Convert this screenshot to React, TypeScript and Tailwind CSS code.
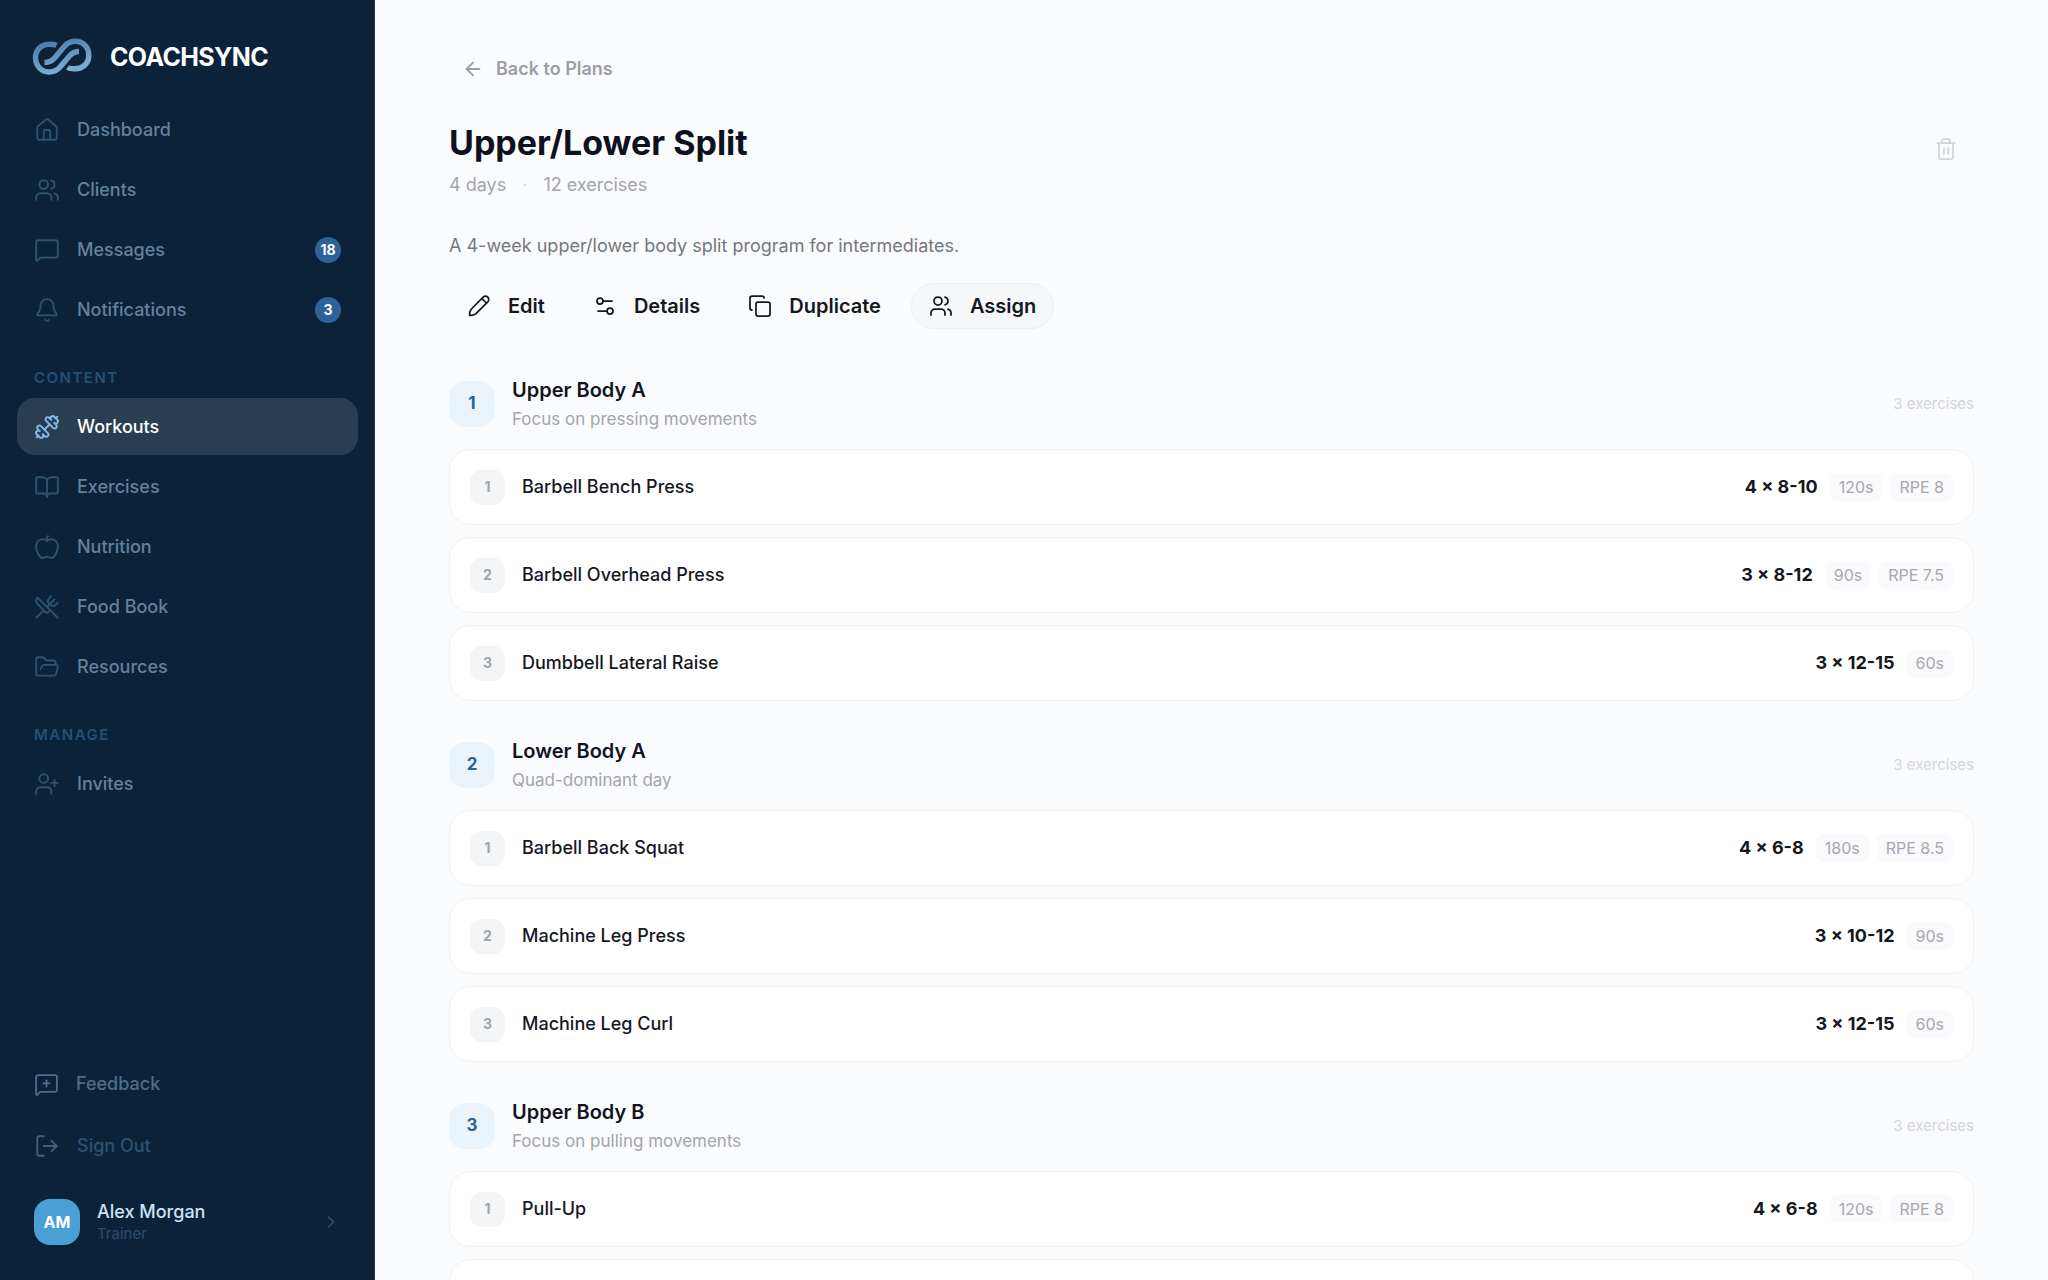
import React from 'react';
import {
  Apple,
  ArrowLeft,
  Bell,
  BookOpen,
  ChevronRight,
  Copy,
  Dumbbell,
  FolderOpen,
  House,
  LogOut,
  LucideIcon,
  MessageSquare,
  MessageSquarePlus,
  Settings2,
  Trash2,
  UserPlus,
  Users,
  UtensilsCrossed,
} from 'lucide-react';

interface NavEntry {
  label: string;
  icon: LucideIcon;
  badge?: number;
  active?: boolean;
}

interface Exercise {
  name: string;
  sets: string;
  rest: string;
  rpe?: string;
}

interface Day {
  title: string;
  focus: string;
  exercises: Exercise[];
}

const mainNav: NavEntry[] = [
  { label: 'Dashboard', icon: House },
  { label: 'Clients', icon: Users },
  { label: 'Messages', icon: MessageSquare, badge: 18 },
  { label: 'Notifications', icon: Bell, badge: 3 },
];

const contentNav: NavEntry[] = [
  { label: 'Workouts', icon: Dumbbell, active: true },
  { label: 'Exercises', icon: BookOpen },
  { label: 'Nutrition', icon: Apple },
  { label: 'Food Book', icon: UtensilsCrossed },
  { label: 'Resources', icon: FolderOpen },
];

const manageNav: NavEntry[] = [{ label: 'Invites', icon: UserPlus }];

const days: Day[] = [
  {
    title: 'Upper Body A',
    focus: 'Focus on pressing movements',
    exercises: [
      { name: 'Barbell Bench Press', sets: '4 × 8-10', rest: '120s', rpe: 'RPE 8' },
      { name: 'Barbell Overhead Press', sets: '3 × 8-12', rest: '90s', rpe: 'RPE 7.5' },
      { name: 'Dumbbell Lateral Raise', sets: '3 × 12-15', rest: '60s' },
    ],
  },
  {
    title: 'Lower Body A',
    focus: 'Quad-dominant day',
    exercises: [
      { name: 'Barbell Back Squat', sets: '4 × 6-8', rest: '180s', rpe: 'RPE 8.5' },
      { name: 'Machine Leg Press', sets: '3 × 10-12', rest: '90s' },
      { name: 'Machine Leg Curl', sets: '3 × 12-15', rest: '60s' },
    ],
  },
  {
    title: 'Upper Body B',
    focus: 'Focus on pulling movements',
    exercises: [
      { name: 'Pull-Up', sets: '4 × 6-8', rest: '120s', rpe: 'RPE 8' },
      { name: 'Barbell Row', sets: '3 × 8-10', rest: '90s' },
    ],
  },
];

const Logo: React.FC = () => (
  <svg viewBox="0 0 60 38" className="h-[38px] w-[60px]" fill="none" strokeWidth="5.5" aria-hidden="true">
    <defs>
      <linearGradient id="logo" x1="0" y1="0" x2="0.4" y2="1">
        <stop offset="0" stopColor="#4a7ba8" />
        <stop offset="1" stopColor="#78acd2" />
      </linearGradient>
    </defs>
    <g stroke="url(#logo)">
      <path d="M24.5 7.2C22.5 6.3 19 6.2 17 6.2C9.5 6.2 3.5 12 3.5 19.5C3.5 28 9.5 34 17 34C22 34 25.5 32 28 29L37.5 18C40 15 43 13.5 47 13.5" />
      <path d="M35.5 29.5C38 31 40.5 30.8 43 30.8C51 30.8 56.8 25 56.8 17.5C56.8 9 51 3.2 43.5 3.2C38.5 3.2 35 5.2 32.5 8.2L23 19.5C20.5 22.5 17.5 24.5 12.5 24.5" />
    </g>
  </svg>
);

const PencilIcon: React.FC<{ className?: string; strokeWidth?: number }> = ({ className, strokeWidth = 2 }) => (
  <svg
    viewBox="0 0 24 24"
    className={className}
    fill="none"
    stroke="currentColor"
    strokeWidth={strokeWidth}
    strokeLinecap="round"
    strokeLinejoin="round"
    aria-hidden="true"
  >
    <path d="M16.2 3.2a3.2 3.2 0 0 1 4.6 4.6L9 19.6C7.2 21.2 5 21.6 2.6 21.4C2.4 19 2.8 16.8 4.4 15Z" />
    <path d="m15 4.6 4.4 4.4" />
  </svg>
);

const NavItem: React.FC<{ item: NavEntry }> = ({ item }) => {
  const Icon = item.icon;
  return (
    <a
      href="#"
      className={`flex h-[57px] items-center gap-[17px] rounded-[18px] px-[17px] text-lg font-medium ${
        item.active ? 'bg-[#2a3e52] text-white' : 'text-[#64819c]'
      }`}
    >
      <Icon className={item.active ? 'size-[26px] text-[#7fbdf0]' : 'size-[26px] text-[#2f536f]'} strokeWidth={1.75} />
      <span className="flex-1">{item.label}</span>
      {item.badge && (
        <span className="flex h-[26px] min-w-[26px] items-center justify-center rounded-full bg-[#2b6399] px-1 text-sm font-bold text-white">
          {item.badge}
        </span>
      )}
    </a>
  );
};

const NavHeading: React.FC<{ children: React.ReactNode }> = ({ children }) => (
  <h2 className="mt-[25px] mb-[5px] px-[17px] text-[15px] leading-6 font-semibold tracking-widest text-[#245078]">{children}</h2>
);

const Sidebar: React.FC = () => (
  <aside className="flex w-[375px] shrink-0 flex-col border-r border-[#1d3a58] bg-[#0c2238] pt-[37px] pr-4 pb-[35px] pl-[17px]">
    <div className="mb-6 flex items-center gap-[18px] px-[15px]">
      <Logo />
      <span className="text-[25px] leading-10 font-bold tracking-tight text-white">COACHSYNC</span>
    </div>
    <nav className="flex flex-col gap-[3px]">
      {mainNav.map((item) => <NavItem key={item.label} item={item} />)}
      <NavHeading>CONTENT</NavHeading>
      {contentNav.map((item) => <NavItem key={item.label} item={item} />)}
      <NavHeading>MANAGE</NavHeading>
      {manageNav.map((item) => <NavItem key={item.label} item={item} />)}
    </nav>
    <div className="mt-auto flex flex-col">
      <button className="flex h-[62px] items-center gap-[17px] px-[17px] text-lg font-medium text-[#4f6d88]">
        <MessageSquarePlus className="size-[25px]" strokeWidth={1.75} />
        Feedback
      </button>
      <button className="flex h-[62px] items-center gap-[17px] px-[17px] text-lg font-medium text-[#2f5170]">
        <LogOut className="size-[26px] text-[#3f6079]" strokeWidth={1.75} />
        Sign Out
      </button>
      <button className="mt-[22px] flex items-center gap-[17px] px-[17px] text-left">
        <span className="flex size-[46px] items-center justify-center rounded-2xl bg-[#4a9fd4] text-base font-bold text-white">AM</span>
        <span className="flex flex-1 flex-col">
          <span className="text-lg leading-6 font-medium text-[#cfe2f7]">Alex Morgan</span>
          <span className="text-[15px] leading-5 text-[#2f4f6d]">Trainer</span>
        </span>
        <ChevronRight className="size-5 text-[#2f4f6d]" />
      </button>
    </div>
  </aside>
);

const Chip: React.FC<{ children: React.ReactNode }> = ({ children }) => (
  <span className="rounded-lg bg-[#fafafc] px-[9px] text-base leading-7 text-[#a6a8ae]">{children}</span>
);

const ExerciseRow: React.FC<{ exercise: Exercise; index: number }> = ({ exercise, index }) => (
  <li className="flex h-[76px] items-center justify-between rounded-[22px] border border-[#f0f1f3] bg-white px-5">
    <div className="flex items-center gap-[17px]">
      <span className="flex size-[35px] items-center justify-center rounded-xl bg-[#f4f5f6] text-sm font-bold text-[#a3a5aa]">
        {index + 1}
      </span>
      <span className="text-lg font-medium text-[#16181f]">{exercise.name}</span>
    </div>
    <div className="flex items-center gap-2">
      <span className="mr-1 text-lg font-bold text-[#16181f]">{exercise.sets}</span>
      <Chip>{exercise.rest}</Chip>
      {exercise.rpe && <Chip>{exercise.rpe}</Chip>}
    </div>
  </li>
);

const DaySection: React.FC<{ day: Day; index: number }> = ({ day, index }) => (
  <section>
    <div className="mb-4 flex items-center gap-[17px]">
      <span className="flex size-[46px] items-center justify-center rounded-2xl bg-[#ebf3fa] text-[17px] font-bold text-[#2b6294]">
        {index + 1}
      </span>
      <div className="flex-1">
        <h2 className="text-xl leading-[30px] font-semibold text-[#12141d]">{day.title}</h2>
        <p className="text-[17px] leading-7 text-[#a3a5ab]">{day.focus}</p>
      </div>
      <span className="text-[15px] text-[#d3d5d9]">3 exercises</span>
    </div>
    <ul className="flex flex-col gap-3">
      {day.exercises.map((exercise, i) => <ExerciseRow key={exercise.name} exercise={exercise} index={i} />)}
    </ul>
  </section>
);

const actions = [
  { label: 'Edit', icon: PencilIcon },
  { label: 'Details', icon: Settings2 },
  { label: 'Duplicate', icon: Copy },
  { label: 'Assign', icon: Users, filled: true },
];

export default function App() {
  return (
    <div className="flex h-screen overflow-hidden bg-[#fafbfd] font-['Inter',sans-serif]">
      <Sidebar />
      <main className="flex-1 overflow-hidden px-[74px] pt-[49px]">
        <a href="#" className="inline-flex h-10 items-center gap-3 px-[13px] text-lg font-semibold text-[#9c9ea4]">
          <ArrowLeft className="size-[22px]" />
          Back to Plans
        </a>

        <div className="mt-7 flex items-start justify-between">
          <div>
            <h1 className="text-[34px] leading-[52px] font-bold text-[#0f111f]">Upper/Lower Split</h1>
            <p className="flex gap-4 text-lg leading-8 text-[#a3a5ab]">
              <span>4 days</span>
              <span className="text-[#d9dbdf]">·</span>
              <span>12 exercises</span>
            </p>
          </div>
          <button aria-label="Delete plan" className="mt-1 flex size-14 items-center justify-center text-[#d3d4d8]">
            <Trash2 className="size-6" strokeWidth={1.75} />
          </button>
        </div>

        <p className="mt-[31px] text-lg leading-7 text-[#75777d]">A 4-week upper/lower body split program for intermediates.</p>

        <div className="mt-[23px] flex gap-3">
          {actions.map(({ label, icon: Icon, filled }) => (
            <button
              key={label}
              className={`flex h-[46px] items-center gap-[17px] rounded-full border px-[17px] text-xl font-semibold text-[#16181f] ${
                filled ? 'border-[#eceef0] bg-[#f6f7f9]' : 'border-transparent'
              }`}
            >
              <Icon className="size-6" strokeWidth={1.75} />
              {label}
            </button>
          ))}
        </div>

        <div className="mt-[46px] flex flex-col gap-[35px]">
          {days.map((day, i) => <DaySection key={day.title} day={day} index={i} />)}
        </div>
      </main>
    </div>
  );
}
